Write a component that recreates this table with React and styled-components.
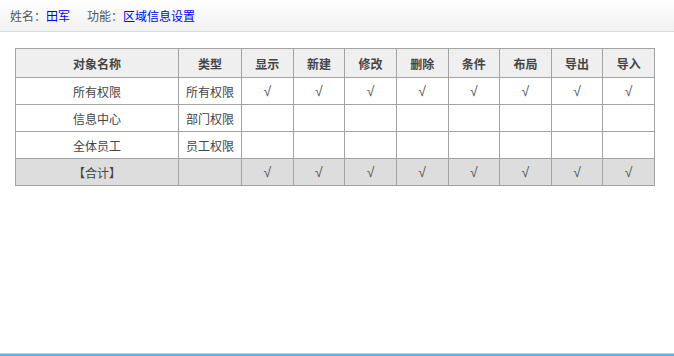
import React from "react";
import styled, { createGlobalStyle } from "styled-components";

const Global = createGlobalStyle`
  html, body { margin: 0; padding: 0; background: #fff; }
  body {
    font-family: "Liberation Sans", "Noto Sans CJK SC", sans-serif;
    font-size: 12px;
    color: #333;
  }
`;

const Page = styled.div`
  display: flex;
  flex-direction: column;
  height: 100vh;
`;

const TopBar = styled.div`
  height: 31px;
  display: flex;
  align-items: center;
  padding: 0 10px;
  gap: 17px;
  background: linear-gradient(#ffffff, #f1f1f1);
  border-bottom: 1px solid #d3dde9;
  font-size: 12px;
`;

const Field = styled.span`
  color: #555;
`;

const Value = styled.span`
  color: #0000ff;
`;

const Content = styled.div`
  flex: 1;
  padding: 16px 19px 0 15px;
`;

const Grid = styled.table`
  width: 640px;
  border-collapse: collapse;
  table-layout: fixed;
`;

const HeadCell = styled.th`
  height: 28px;
  padding: 0;
  border: 1px solid #a3a3a3;
  background: #efefef;
  color: #444;
  font-weight: bold;
  font-size: 12px;
  text-align: center;
`;

const Cell = styled.td`
  height: 26px;
  padding: 0;
  border: 1px solid #a3a3a3;
  background: ${(p) => (p.$total ? "#dddddd" : "#ffffff")};
  color: #444;
  font-size: 12px;
  text-align: center;
`;

const Check = styled.span`
  color: #555;
  font-family: "Liberation Sans", sans-serif;
  font-size: 14px;
`;

const Footer = styled.div`
  height: 2px;
  border-top: 1px solid #a8d6f6;
  background: #5cb2ec;
`;

const actions = ["显示", "新建", "修改", "删除", "条件", "布局", "导出", "导入"];

const rows = [
  { name: "所有权限", type: "所有权限", granted: true },
  { name: "信息中心", type: "部门权限", granted: false },
  { name: "全体员工", type: "员工权限", granted: false },
];

export default function App() {
  return (
    <Page>
      <Global />
      <TopBar>
        <Field>
          姓名：<Value>田军</Value>
        </Field>
        <Field>
          功能：<Value>区域信息设置</Value>
        </Field>
      </TopBar>
      <Content>
        <Grid>
          <colgroup>
            <col style={{ width: 163 }} />
            <col style={{ width: 63 }} />
            {actions.map((a) => (
              <col key={a} />
            ))}
          </colgroup>
          <thead>
            <tr>
              <HeadCell>对象名称</HeadCell>
              <HeadCell>类型</HeadCell>
              {actions.map((a) => (
                <HeadCell key={a}>{a}</HeadCell>
              ))}
            </tr>
          </thead>
          <tbody>
            {rows.map((r) => (
              <tr key={r.name}>
                <Cell>{r.name}</Cell>
                <Cell>{r.type}</Cell>
                {actions.map((a) => (
                  <Cell key={a}>{r.granted && <Check>√</Check>}</Cell>
                ))}
              </tr>
            ))}
            <tr>
              <Cell $total>【合计】</Cell>
              <Cell $total />
              {actions.map((a) => (
                <Cell $total key={a}>
                  <Check>√</Check>
                </Cell>
              ))}
            </tr>
          </tbody>
        </Grid>
      </Content>
      <Footer />
    </Page>
  );
}
